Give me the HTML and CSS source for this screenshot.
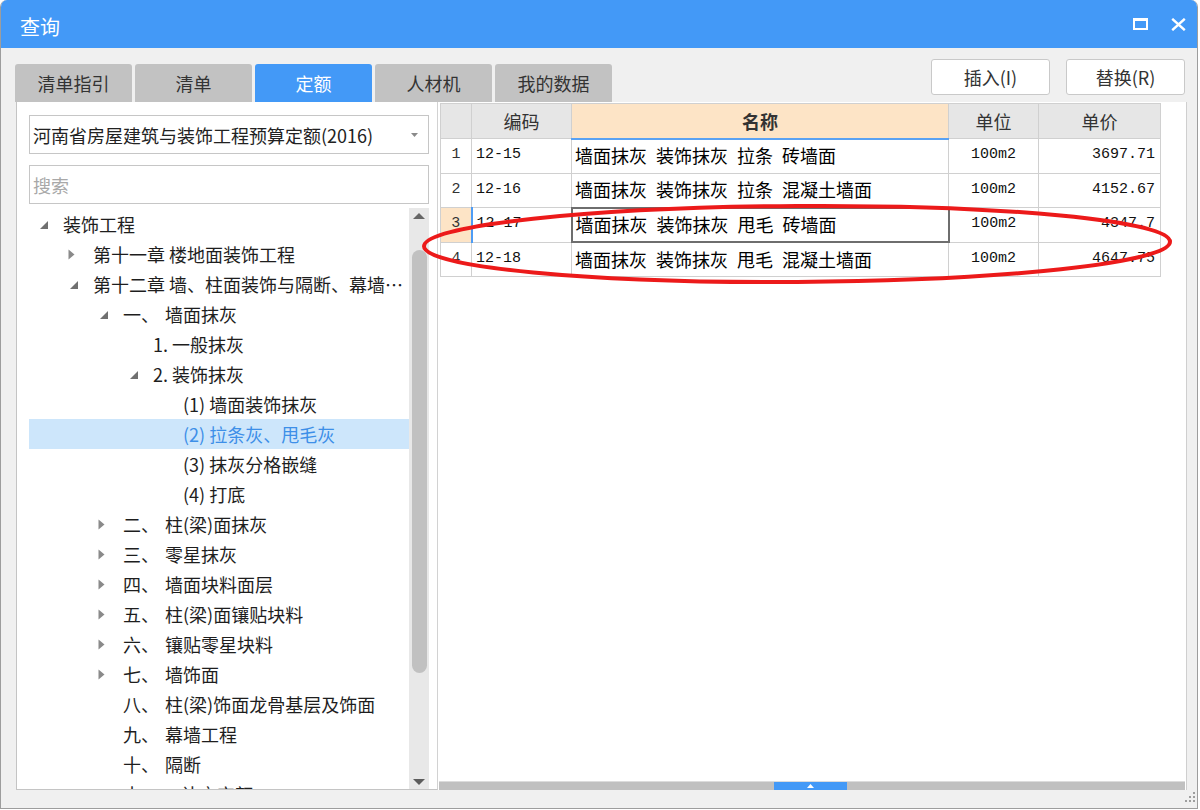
FILE: index.html
```html
<!DOCTYPE html>
<html lang="zh-CN">
<head>
<meta charset="utf-8">
<title>查询</title>
<link rel="stylesheet" href="styles.css">
</head>
<body>
<div class="window">
  <div class="titlebar">
    <span class="title">查询</span>
    <div class="win-btns">
      <svg class="ico" width="15" height="12" viewBox="0 0 15 12"><rect x="1" y="1.5" width="13" height="9.5" fill="none" stroke="#fff" stroke-width="2"/><rect x="0" y="0" width="15" height="3" fill="#fff"/></svg>
      <svg class="ico" width="15" height="13" viewBox="0 0 15 13"><path d="M1.2 0.8L13.8 12.2M13.8 0.8L1.2 12.2" stroke="#fff" stroke-width="2.4" fill="none"/></svg>
    </div>
  </div>

  <div class="toolbar">
    <div class="tabs">
      <div class="tab">清单指引</div>
      <div class="tab">清单</div>
      <div class="tab active">定额</div>
      <div class="tab">人材机</div>
      <div class="tab">我的数据</div>
    </div>
    <div class="actions">
      <button class="btn">插入(I)</button>
      <button class="btn">替换(R)</button>
    </div>
  </div>

  <div class="content">
    <div class="left">
      <div class="combo">
        <span class="combo-text">河南省房屋建筑与装饰工程预算定额(2016)</span>
        <svg class="caret" width="7" height="4" viewBox="0 0 7 4"><path d="M0 0H7L3.5 4Z" fill="#8a8a8a"/></svg>
      </div>
      <div class="search">搜索</div>
      <div class="tree-wrap">
        <div class="tree">
          <div class="node l0"><span class="tw"><svg class="ex" width="10" height="10" viewBox="0 0 10 10"><path d="M9 1V9H1Z" fill="#707070"/></svg></span><span class="lbl">装饰工程</span></div>
          <div class="node l1"><span class="tw"><svg class="co" width="7" height="11" viewBox="0 0 7 11"><path d="M0.5 0.5L6.5 5.5L0.5 10.5Z" fill="#8a8a8a"/></svg></span><span class="lbl">第十一章 楼地面装饰工程</span></div>
          <div class="node l1"><span class="tw"><svg class="ex" width="10" height="10" viewBox="0 0 10 10"><path d="M9 1V9H1Z" fill="#707070"/></svg></span><span class="lbl">第十二章 墙、柱面装饰与隔断、幕墙工程</span></div>
          <div class="node l2"><span class="tw"><svg class="ex" width="10" height="10" viewBox="0 0 10 10"><path d="M9 1V9H1Z" fill="#707070"/></svg></span><span class="lbl"><span class="pre">一、</span>墙面抹灰</span></div>
          <div class="node l3"><span class="tw"></span><span class="lbl">1. 一般抹灰</span></div>
          <div class="node l3"><span class="tw"><svg class="ex" width="10" height="10" viewBox="0 0 10 10"><path d="M9 1V9H1Z" fill="#707070"/></svg></span><span class="lbl">2. 装饰抹灰</span></div>
          <div class="node l4"><span class="tw"></span><span class="lbl">(1) 墙面装饰抹灰</span></div>
          <div class="node l4 selected"><span class="tw"></span><span class="lbl">(2) 拉条灰、甩毛灰</span></div>
          <div class="node l4"><span class="tw"></span><span class="lbl">(3) 抹灰分格嵌缝</span></div>
          <div class="node l4"><span class="tw"></span><span class="lbl">(4) 打底</span></div>
          <div class="node l2"><span class="tw"><svg class="co" width="7" height="11" viewBox="0 0 7 11"><path d="M0.5 0.5L6.5 5.5L0.5 10.5Z" fill="#8a8a8a"/></svg></span><span class="lbl"><span class="pre">二、</span>柱(梁)面抹灰</span></div>
          <div class="node l2"><span class="tw"><svg class="co" width="7" height="11" viewBox="0 0 7 11"><path d="M0.5 0.5L6.5 5.5L0.5 10.5Z" fill="#8a8a8a"/></svg></span><span class="lbl"><span class="pre">三、</span>零星抹灰</span></div>
          <div class="node l2"><span class="tw"><svg class="co" width="7" height="11" viewBox="0 0 7 11"><path d="M0.5 0.5L6.5 5.5L0.5 10.5Z" fill="#8a8a8a"/></svg></span><span class="lbl"><span class="pre">四、</span>墙面块料面层</span></div>
          <div class="node l2"><span class="tw"><svg class="co" width="7" height="11" viewBox="0 0 7 11"><path d="M0.5 0.5L6.5 5.5L0.5 10.5Z" fill="#8a8a8a"/></svg></span><span class="lbl"><span class="pre">五、</span>柱(梁)面镶贴块料</span></div>
          <div class="node l2"><span class="tw"><svg class="co" width="7" height="11" viewBox="0 0 7 11"><path d="M0.5 0.5L6.5 5.5L0.5 10.5Z" fill="#8a8a8a"/></svg></span><span class="lbl"><span class="pre">六、</span>镶贴零星块料</span></div>
          <div class="node l2"><span class="tw"><svg class="co" width="7" height="11" viewBox="0 0 7 11"><path d="M0.5 0.5L6.5 5.5L0.5 10.5Z" fill="#8a8a8a"/></svg></span><span class="lbl"><span class="pre">七、</span>墙饰面</span></div>
          <div class="node l2"><span class="tw"></span><span class="lbl"><span class="pre">八、</span>柱(梁)饰面龙骨基层及饰面</span></div>
          <div class="node l2"><span class="tw"></span><span class="lbl"><span class="pre">九、</span>幕墙工程</span></div>
          <div class="node l2"><span class="tw"></span><span class="lbl"><span class="pre">十、</span>隔断</span></div>
          <div class="node l2"><span class="tw"></span><span class="lbl"><span class="pre">十一、</span> 补充定额</span></div>
        </div>
        <div class="vscroll">
          <svg class="vs-up" width="12" height="6" viewBox="0 0 12 6"><path d="M0 6L6 0L12 6Z" fill="#666"/></svg>
          <div class="vs-thumb"></div>
          <svg class="vs-down" width="12" height="6" viewBox="0 0 12 6"><path d="M0 0L6 6L12 0Z" fill="#5c5c5c"/></svg>
        </div>
      </div>
    </div>

    <div class="right">
      <div class="grid-area">
        <table class="grid">
          <colgroup>
            <col class="c-num"><col class="c-code"><col class="c-name"><col class="c-unit"><col class="c-price">
          </colgroup>
          <thead>
            <tr><th></th><th>编码</th><th class="h-name">名称</th><th>单位</th><th>单价</th></tr>
          </thead>
          <tbody>
            <tr><td class="num">1</td><td class="code">12-15</td><td class="name">墙面抹灰 装饰抹灰 拉条 砖墙面</td><td class="unit">100m2</td><td class="price">3697.71</td></tr>
            <tr><td class="num">2</td><td class="code">12-16</td><td class="name">墙面抹灰 装饰抹灰 拉条 混凝土墙面</td><td class="unit">100m2</td><td class="price">4152.67</td></tr>
            <tr class="cur"><td class="num">3</td><td class="code">12-17</td><td class="name">墙面抹灰 装饰抹灰 甩毛 砖墙面</td><td class="unit">100m2</td><td class="price">4347.7</td></tr>
            <tr><td class="num">4</td><td class="code">12-18</td><td class="name">墙面抹灰 装饰抹灰 甩毛 混凝土墙面</td><td class="unit">100m2</td><td class="price">4647.75</td></tr>
          </tbody>
        </table>
      </div>
      <div class="hscroll">
        <div class="hs-thumb"><svg width="7" height="4" viewBox="0 0 7 4"><path d="M0 4L3.5 0L7 4Z" fill="#fff"/></svg></div>
      </div>
    </div>
  </div>

  <div class="statusbar">
    <svg class="grip" width="12" height="12" viewBox="0 0 12 12"><g fill="#9e9e9e"><rect x="9" y="1" width="2" height="2"/><rect x="5" y="5" width="2" height="2"/><rect x="9" y="5" width="2" height="2"/><rect x="1" y="9" width="2" height="2"/><rect x="5" y="9" width="2" height="2"/><rect x="9" y="9" width="2" height="2"/></g></svg>
  </div>

  <svg class="annot" width="756" height="86" viewBox="0 0 756 86"><ellipse cx="378" cy="43" rx="373" ry="38" fill="none" stroke="#ec1a1a" stroke-width="4" transform="rotate(-0.35 378 43)"/></svg>
</div>
</body>
</html>
```

FILE: styles.css
```css
* { box-sizing: border-box; }

html, body {
  margin: 0;
  padding: 0;
  background: #fff;
}

body {
  width: 1200px;
  height: 810px;
  overflow: hidden;
  font-family: "Noto Sans CJK SC", "Microsoft YaHei", sans-serif;
  color: #222;
}

.window {
  position: relative;
  width: 1198px;
  height: 809px;
  background: #f0f0f0;
  border: 1px solid #9d9d9d;
  border-top: none;
  border-radius: 7px 7px 0 0;
  display: flex;
  flex-direction: column;
  overflow: hidden;
}

/* title bar */
.titlebar {
  height: 48px;
  flex: none;
  background: #4399f7;
  display: flex;
  align-items: center;
  padding: 0 11px 0 19px;
}
.title {
  font-size: 20px;
  color: #fff;
  margin-top: 4px;
}
.win-btns {
  margin-left: auto;
  display: flex;
  align-items: center;
  gap: 23px;
}
.ico { display: block; }

/* toolbar with tabs and buttons */
.toolbar {
  height: 54px;
  flex: none;
  display: flex;
  padding: 0 12px 0 14px;
}
.tabs {
  display: flex;
  gap: 3px;
  align-self: flex-end;
}
.tab {
  width: 117px;
  height: 38px;
  background: #c2c2c2;
  border-radius: 3px 3px 0 0;
  display: flex;
  align-items: center;
  justify-content: center;
  font-size: 18px;
  color: #333;
}
.tab.active {
  background: #4399f7;
  color: #fff;
}
.actions {
  margin-left: auto;
  align-self: flex-start;
  margin-top: 11px;
  display: flex;
  gap: 16px;
}
.btn {
  width: 119px;
  height: 36px;
  padding: 0;
  background: #fff;
  border: 1px solid #c9c9c9;
  border-radius: 3px;
  font-family: inherit;
  font-size: 18px;
  color: #333;
}

/* content */
.content {
  height: 688px;
  flex: none;
  display: flex;
  margin: 0 10px 0 15px;
}

.left {
  width: 422px;
  flex: none;
  background: #fff;
  border-left: 1px solid #c4c4c4;
  border-right: 1px solid #d2d2d2;
  border-bottom: 1px solid #c4c4c4;
  padding: 13px 8px 0 12px;
  display: flex;
  flex-direction: column;
}
.combo {
  height: 39px;
  flex: none;
  border: 1px solid #c6c6c6;
  display: flex;
  align-items: center;
  padding: 0 10px 0 3px;
  font-size: 18px;
  color: #222;
}
.combo-text {
  white-space: nowrap;
  margin-top: 1px;
}
.caret {
  margin-left: auto;
  display: block;
}
.search {
  height: 39px;
  flex: none;
  margin-top: 11px;
  border: 1px solid #c6c6c6;
  display: flex;
  align-items: center;
  padding: 0 3px;
  font-size: 18px;
  color: #a8a8a8;
}

.tree-wrap {
  flex: 1;
  min-height: 0;
  margin-top: 4px;
  display: flex;
}
.tree {
  flex: 1;
  min-width: 0;
  overflow: hidden;
  padding-top: 1px;
}
.node {
  height: 30px;
  display: flex;
  align-items: center;
  font-size: 18px;
  color: #1e1e1e;
  white-space: nowrap;
}
.node.l0 { padding-left: 8px; }
.node.l1 { padding-left: 38px; }
.node.l2 { padding-left: 68px; }
.node.l3 { padding-left: 98px; }
.node.l4 { padding-left: 128px; }
.tw {
  width: 26px;
  flex: none;
  display: flex;
  align-items: center;
}
.tw .ex { margin-left: 2px; margin-top: 2px; display: block; }
.tw .co { margin-left: 1px; display: block; }
.lbl {
  overflow: hidden;
  text-overflow: ellipsis;
  min-width: 0;
}
.pre {
  display: inline-block;
  min-width: 42px;
}
.node.selected {
  background: #cde6fb;
  color: #3d8fe8;
}

.vscroll {
  width: 20px;
  flex: none;
  background: #e8e8e8;
  display: flex;
  flex-direction: column;
  align-items: center;
  padding: 5px 0 4px;
}
.vs-up, .vs-down { display: block; flex: none; }
.vs-thumb {
  width: 15px;
  height: 423px;
  margin-top: 31px;
  background: #c1c1c1;
  border-radius: 8px;
}
.vs-down { margin-top: auto; }

/* right grid panel */
.right {
  flex: 1;
  background: #fff;
  border-right: 1px solid #cfcfcf;
  display: flex;
  flex-direction: column;
}
.grid-area {
  flex: 1;
  padding: 1px 0 0 2px;
}
.grid {
  border-collapse: collapse;
  table-layout: fixed;
  width: 721px;
}
.c-num { width: 31px; }
.c-code { width: 100px; }
.c-name { width: 377px; }
.c-unit { width: 90px; }
.c-price { width: 122px; }

.grid th {
  height: 35px;
  background: #e6e6e6;
  border: 1px solid #d0d0d0;
  font-weight: normal;
  font-size: 18px;
  color: #333;
  padding: 0;
}
.grid th.h-name {
  background: #fde4c6;
  font-weight: bold;
  border-bottom: 2px solid #5aa2f3;
}
.grid td {
  height: 34.5px;
  border: 1px solid #d0d0d0;
  padding: 0 0 2px;
  color: #111;
  white-space: nowrap;
  overflow: hidden;
}
.grid td.num {
  text-align: center;
  font-family: "Liberation Mono", monospace;
  font-size: 15px;
  color: #333;
}
.grid td.code {
  padding-left: 4px;
  font-family: "Liberation Mono", monospace;
  font-size: 15px;
}
.grid td.name {
  padding-left: 3px;
  font-size: 18px;
  word-spacing: 5px;
  color: #000;
}
.grid td.unit {
  text-align: center;
  font-family: "Liberation Mono", monospace;
  font-size: 15px;
}
.grid td.price {
  text-align: right;
  padding-right: 5px;
  font-family: "Liberation Mono", monospace;
  font-size: 15px;
}
.grid tr.cur td.num { background: #fde4c6; }
.grid tr.cur td.code { border-left: 2px solid #4d9cf5; }
.grid tr.cur td.name { border: 2px solid #6e6e6e; }

.hscroll {
  height: 9px;
  flex: none;
  margin: 0 1px;
  border-top: 1px solid #dcdcdc;
  background: #c0c0c0;
  display: flex;
}
.hs-thumb {
  width: 73px;
  margin-left: 335px;
  background: #4399f7;
  display: flex;
  align-items: center;
  justify-content: center;
}
.hs-thumb svg { display: block; }

/* bottom strip */
.statusbar {
  flex: 1;
  display: flex;
  justify-content: flex-end;
  align-items: flex-start;
  padding: 1px 1px 0 0;
}
.grip { display: block; }

/* hand-drawn annotation */
.annot {
  position: absolute;
  left: 418px;
  top: 201px;
  pointer-events: none;
}
```
